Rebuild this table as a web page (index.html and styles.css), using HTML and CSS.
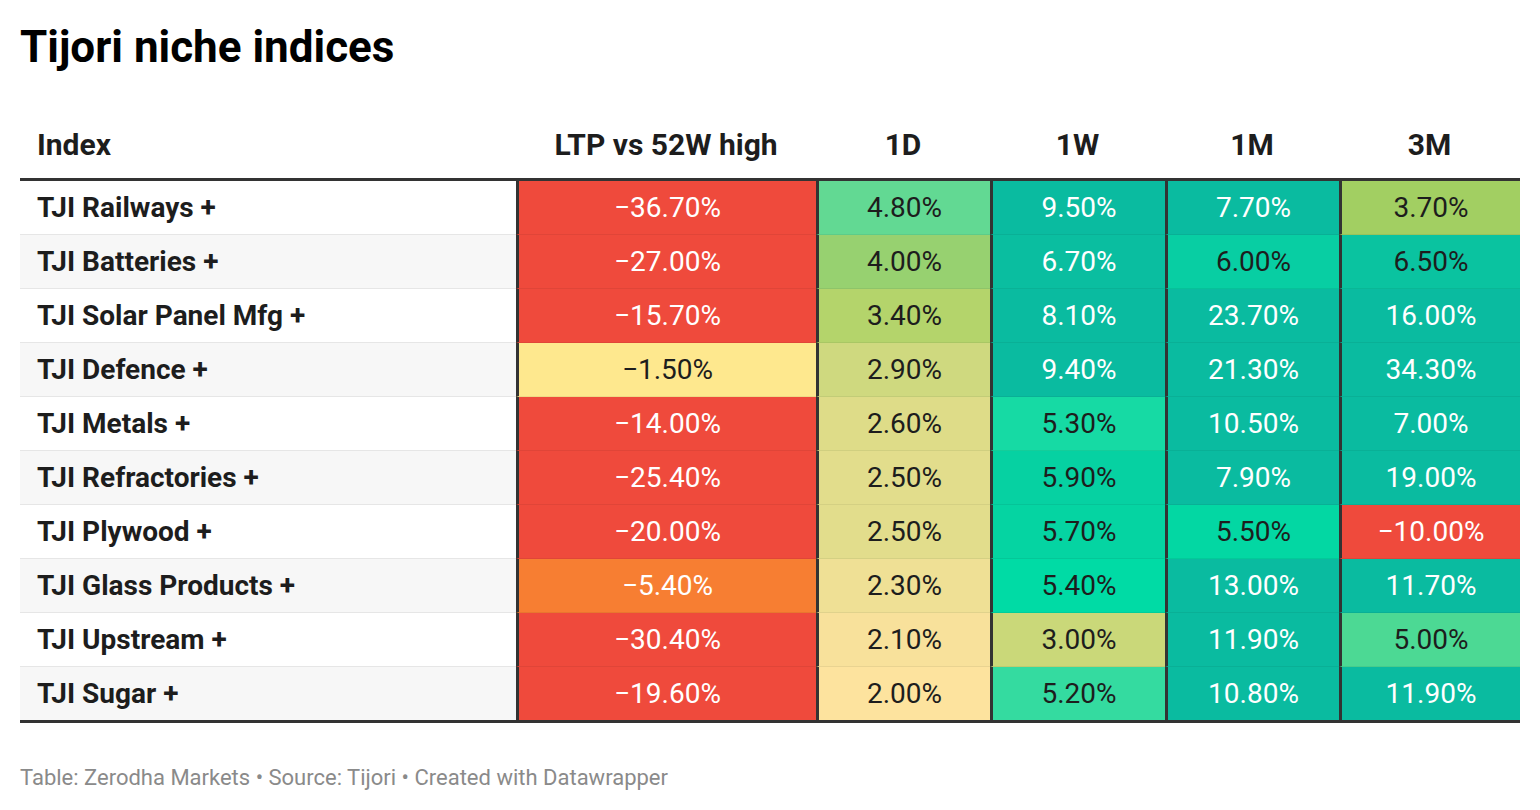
FILE: index.html
```html
<!DOCTYPE html>
<html lang="en">
<head>
<meta charset="utf-8">
<title>Tijori niche indices</title>
<link rel="stylesheet" href="styles.css">
</head>
<body>
<div class="chart">
  <h1 class="title">Tijori niche indices</h1>
  <div class="table">
    <div class="row head">
      <div class="cell name">Index</div>
      <div class="cell">LTP vs 52W high</div>
      <div class="cell">1D</div>
      <div class="cell">1W</div>
      <div class="cell">1M</div>
      <div class="cell">3M</div>
    </div>
    <div class="body">
      <div class="row">
        <div class="cell name">TJI Railways +</div>
        <div class="cell v lt" style="background:#ef4a3c">−36.70%</div>
        <div class="cell v" style="background:#62d993">4.80%</div>
        <div class="cell v lt" style="background:#0abba0">9.50%</div>
        <div class="cell v lt" style="background:#0abba0">7.70%</div>
        <div class="cell v" style="background:#a2cf62">3.70%</div>
      </div>
      <div class="row">
        <div class="cell name">TJI Batteries +</div>
        <div class="cell v lt" style="background:#ef4a3c">−27.00%</div>
        <div class="cell v" style="background:#97d170">4.00%</div>
        <div class="cell v lt" style="background:#0abea0">6.70%</div>
        <div class="cell v" style="background:#08cea3">6.00%</div>
        <div class="cell v" style="background:#0ac3a0">6.50%</div>
      </div>
      <div class="row">
        <div class="cell name">TJI Solar Panel Mfg +</div>
        <div class="cell v lt" style="background:#ef4a3c">−15.70%</div>
        <div class="cell v" style="background:#b4d46b">3.40%</div>
        <div class="cell v lt" style="background:#0abba0">8.10%</div>
        <div class="cell v lt" style="background:#0abba0">23.70%</div>
        <div class="cell v lt" style="background:#0abba0">16.00%</div>
      </div>
      <div class="row">
        <div class="cell name">TJI Defence +</div>
        <div class="cell v" style="background:#fee88e">−1.50%</div>
        <div class="cell v" style="background:#cfd97f">2.90%</div>
        <div class="cell v lt" style="background:#0abba0">9.40%</div>
        <div class="cell v lt" style="background:#0abba0">21.30%</div>
        <div class="cell v lt" style="background:#0abba0">34.30%</div>
      </div>
      <div class="row">
        <div class="cell name">TJI Metals +</div>
        <div class="cell v lt" style="background:#ef4a3c">−14.00%</div>
        <div class="cell v" style="background:#dedc88">2.60%</div>
        <div class="cell v" style="background:#16daa4">5.30%</div>
        <div class="cell v lt" style="background:#0abba0">10.50%</div>
        <div class="cell v lt" style="background:#0abba0">7.00%</div>
      </div>
      <div class="row">
        <div class="cell name">TJI Refractories +</div>
        <div class="cell v lt" style="background:#ef4a3c">−25.40%</div>
        <div class="cell v" style="background:#e2dd8c">2.50%</div>
        <div class="cell v" style="background:#06d1a2">5.90%</div>
        <div class="cell v lt" style="background:#0abba0">7.90%</div>
        <div class="cell v lt" style="background:#0abba0">19.00%</div>
      </div>
      <div class="row">
        <div class="cell name">TJI Plywood +</div>
        <div class="cell v lt" style="background:#ef4a3c">−20.00%</div>
        <div class="cell v" style="background:#e2dd8c">2.50%</div>
        <div class="cell v" style="background:#05d4a2">5.70%</div>
        <div class="cell v" style="background:#03d7a3">5.50%</div>
        <div class="cell v lt" style="background:#ef4a3c">−10.00%</div>
      </div>
      <div class="row">
        <div class="cell name">TJI Glass Products +</div>
        <div class="cell v lt" style="background:#f77e32">−5.40%</div>
        <div class="cell v" style="background:#efe095">2.30%</div>
        <div class="cell v" style="background:#00dba5">5.40%</div>
        <div class="cell v lt" style="background:#0abba0">13.00%</div>
        <div class="cell v lt" style="background:#0abba0">11.70%</div>
      </div>
      <div class="row">
        <div class="cell name">TJI Upstream +</div>
        <div class="cell v lt" style="background:#ef4a3c">−30.40%</div>
        <div class="cell v" style="background:#f8e19b">2.10%</div>
        <div class="cell v" style="background:#cad879">3.00%</div>
        <div class="cell v lt" style="background:#0abba0">11.90%</div>
        <div class="cell v" style="background:#4cd994">5.00%</div>
      </div>
      <div class="row">
        <div class="cell name">TJI Sugar +</div>
        <div class="cell v lt" style="background:#ef4a3c">−19.60%</div>
        <div class="cell v" style="background:#fde39e">2.00%</div>
        <div class="cell v" style="background:#34dba0">5.20%</div>
        <div class="cell v lt" style="background:#0abba0">10.80%</div>
        <div class="cell v lt" style="background:#0abba0">11.90%</div>
      </div>
    </div>
  </div>
  <p class="footer">Table: Zerodha Markets • Source: Tijori • Created with Datawrapper</p>
</div>
</body>
</html>
```

FILE: styles.css
```css
* { box-sizing: border-box; }

html, body {
  margin: 0;
  padding: 0;
  background: #ffffff;
}

body {
  font-family: Roboto, "Liberation Sans", Arial, sans-serif;
  color: #1d1d1d;
}

.chart {
  padding: 20px 20px 0 20px;
  width: 1540px;
}

.title {
  margin: 0;
  padding-top: 2px;
  font-size: 44px;
  line-height: 50px;
  font-weight: 700;
  color: #000;
}

.table {
  width: 1500px;
}

.row {
  display: grid;
  grid-template-columns: 496px 300px 174px 175px 174px 181px;
}

.head {
  height: 109px;
  border-bottom: 3px solid #333333;
}

.head .cell {
  display: flex;
  align-items: flex-end;
  justify-content: center;
  padding-bottom: 16px;
  font-size: 30px;
  line-height: 34px;
  font-weight: 700;
  color: #1d1d1d;
}

.head .cell.name {
  justify-content: flex-start;
  padding-left: 17px;
}

.body {
  border-bottom: 3px solid #333333;
}

.body .row {
  height: 54px;
}

.body .row:last-child {
  height: 53px;
}

.body .cell {
  display: flex;
  align-items: center;
  font-size: 28px;
  line-height: 32px;
  border-bottom: 1px solid rgba(0, 0, 0, 0.06);
}

.body .row:last-child .cell {
  border-bottom: none;
}

.body .cell.name {
  padding-left: 17px;
  font-weight: 700;
  font-size: 28px;
  background: #ffffff;
  border-bottom-color: #e6e6e6;
}

.body .row:nth-child(even) .cell.name {
  background: #f7f7f7;
}

.cell.v {
  justify-content: center;
  border-left: 3px solid #333333;
  color: #1d1d1d;
  font-weight: 400;
}

.cell.v.lt {
  color: #ffffff;
}

.footer {
  margin: 42px 0 0 0;
  font-size: 22px;
  line-height: 26px;
  color: #8a8a8a;
}
```
